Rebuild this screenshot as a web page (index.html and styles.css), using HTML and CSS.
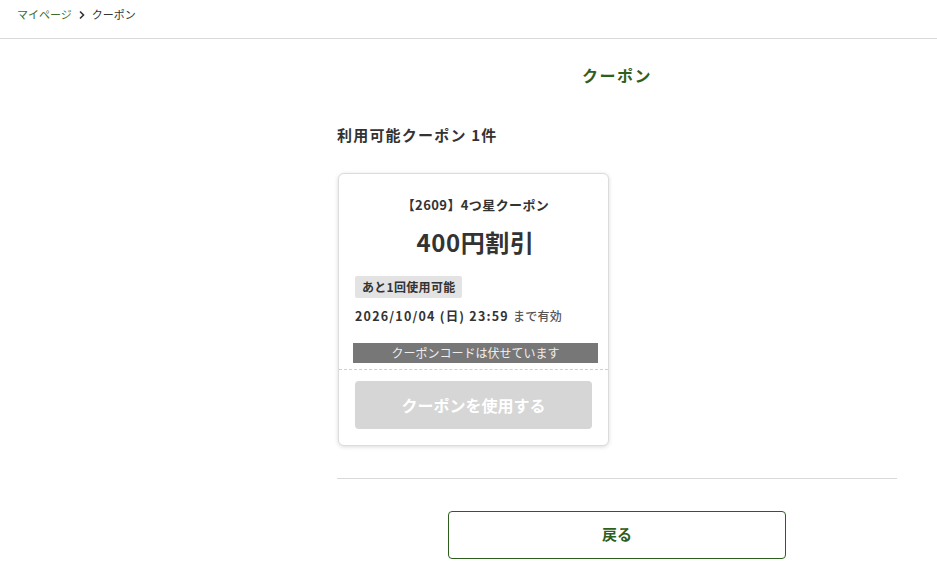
FILE: index.html
```html
<!DOCTYPE html>
<html lang="ja">
  <head>
    <meta charset="UTF-8" />
    <meta name="viewport" content="width=device-width, initial-scale=1.0" />
    <title>クーポン</title>
    <link rel="stylesheet" href="styles.css">
  </head>
  <body>
    <nav class="breadcrumb">
      <a href="#" class="crumb-link">マイページ</a>
      <svg class="crumb-arrow" width="8" height="10" viewBox="0 0 8 10">
        <path d="M2 1.5 L5.5 5 L2 8.5" fill="none" stroke="#333" stroke-width="1.6" />
      </svg>
      <span class="crumb-current">クーポン</span>
    </nav>

    <main class="content">
      <h1 class="page-title">クーポン</h1>
      <h2 class="count">利用可能クーポン 1件</h2>

      <div class="coupon">
        <div class="coupon-body">
          <p class="coupon-name">【2609】4つ星クーポン</p>
          <p class="coupon-value">400円割引</p>
          <span class="badge">あと1回使用可能</span>
          <p class="expire">2026/10/04 (日) 23:59 <span class="expire-note">まで有効</span></p>
          <div class="code-mask">クーポンコードは伏せています</div>
        </div>
        <div class="coupon-foot">
          <button class="use-btn" disabled>クーポンを使用する</button>
        </div>
      </div>

      <hr class="sep" />

      <div class="flex center">
        <button class="back-btn">戻る</button>
      </div>
    </main>
  </body>
</html>
```

FILE: styles.css
```css
body {
  margin: 0;
  padding: 0;
  font-family: "Noto Sans CJK JP", "Noto Sans", sans-serif;
  color: #333;
  background: white;
}

p {
  margin: 0;
}

.breadcrumb {
  height: 38px;
  border-bottom: 1px solid #d9d9d9;
  padding-left: 17px;
  display: flex;
  align-items: flex-start;
  gap: 6px;
  font-size: 11px;
  line-height: 29px;
}

.crumb-link {
  color: #3d6b2c;
  text-decoration: none;
}

.crumb-arrow {
  margin-top: 10px;
}

.crumb-current {
  color: #333;
}

.content {
  width: 560px;
  margin-left: 337px;
}

.page-title {
  margin: 24px 0 0;
  text-align: center;
  font-size: 16px;
  line-height: 24px;
  letter-spacing: 1.5px;
  color: #2e5e1e;
}

.count {
  margin: 36px 0 0;
  font-size: 15px;
  line-height: 24px;
  letter-spacing: 1.2px;
}

.coupon {
  width: 269px;
  margin: 26px 0 0 1px;
  border: 1px solid #dcdcdc;
  border-radius: 6px;
  box-shadow: 0 1px 4px rgba(0, 0, 0, 0.15);
  background: white;
}

.coupon-body {
  padding: 21px 10px 6px 14px;
  border-bottom: 1px dashed #cfcfcf;
}

.coupon-name {
  text-align: center;
  font-size: 13px;
  font-weight: bold;
  line-height: 20px;
  letter-spacing: 0.4px;
}

.coupon-value {
  margin-top: 12px;
  text-align: center;
  font-size: 24px;
  font-weight: bold;
  line-height: 30px;
  letter-spacing: 0.6px;
}

.badge {
  display: inline-block;
  margin: 19px 0 0 2px;
  padding: 0 7px;
  background: #e3e3e3;
  border-radius: 2px;
  font-size: 12px;
  font-weight: bold;
  line-height: 22px;
  letter-spacing: 0.3px;
}

.expire {
  margin: 8px 0 0 2px;
  font-size: 12.5px;
  font-weight: bold;
  line-height: 20px;
  letter-spacing: 1.2px;
}

.expire-note {
  font-size: 12px;
  font-weight: 500;
  color: #555;
  letter-spacing: 0.3px;
}

.code-mask {
  margin-top: 17px;
  background: #777;
  color: #eee;
  text-align: center;
  font-size: 12px;
  line-height: 20px;
}

.coupon-foot {
  padding: 11px 16px 16px;
}

.use-btn {
  display: block;
  width: 100%;
  height: 48px;
  padding-bottom: 2px;
  border: none;
  border-radius: 4px;
  background: #d6d6d6;
  color: white;
  font-family: inherit;
  font-size: 16px;
  font-weight: bold;
}

.sep {
  margin: 32px 0 0;
  border: none;
  border-top: 1px solid #d9d9d9;
}

.flex {
  display: flex;
}

.center {
  justify-content: center;
}

.back-btn {
  margin-top: 32px;
  width: 338px;
  height: 48px;
  padding-bottom: 5px;
  border: 1.5px solid #2e5e1e;
  border-radius: 4px;
  background: white;
  color: #2e5e1e;
  font-family: inherit;
  font-size: 15px;
  font-weight: bold;
  cursor: pointer;
}
```
